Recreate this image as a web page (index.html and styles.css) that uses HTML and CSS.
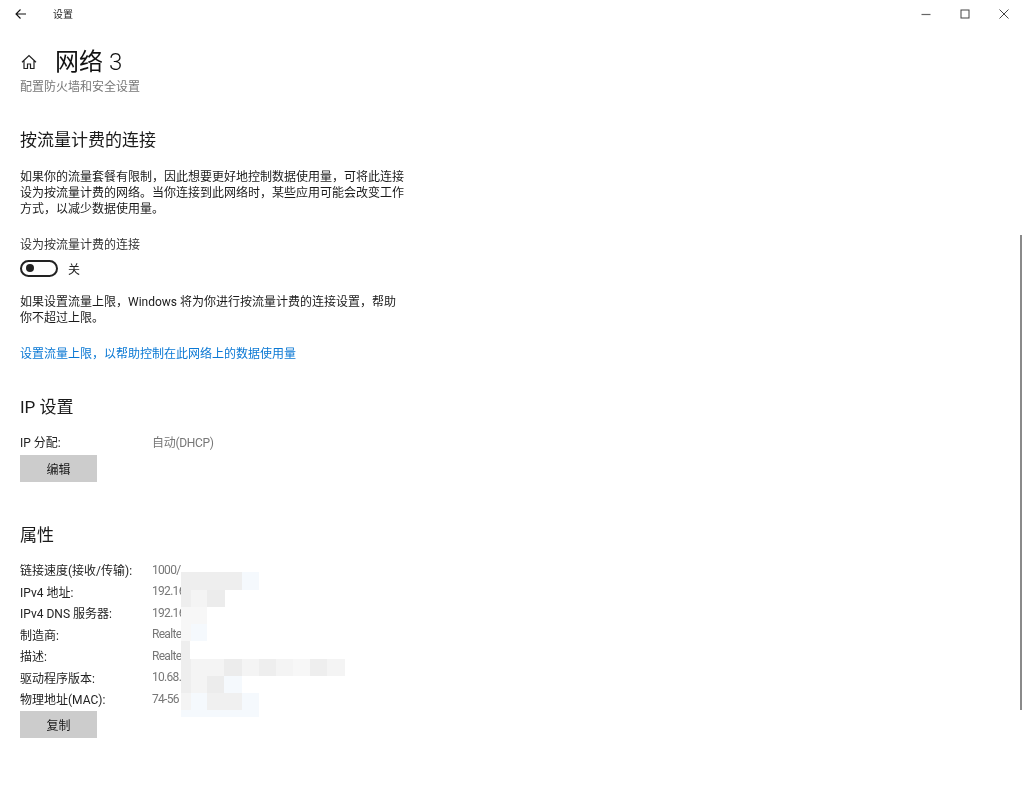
FILE: index.html
```html
<!DOCTYPE html>
<html lang="zh-CN">
<head>
<meta charset="utf-8">
<title>设置</title>
<link rel="stylesheet" href="styles.css">
</head>
<body>
<div class="window">
  <header class="titlebar">
    <svg class="back" width="14" height="14" viewBox="0 0 14 14"><path d="M12 7H2M6.500 2.500L2 7l4.500 4.500" fill="none" stroke="#111" stroke-width="1.100"/></svg>
    <span class="app-name">设置</span>
    <div class="controls">
      <svg class="ctl" width="12" height="12" viewBox="0 0 12 12"><path d="M1.500 6.500h9" stroke="#666" stroke-width="1.200"/></svg>
      <svg class="ctl" width="12" height="12" viewBox="0 0 12 12"><rect x="2" y="2" width="8" height="8" fill="none" stroke="#444" stroke-width="1"/></svg>
      <svg class="ctl" width="12" height="12" viewBox="0 0 12 12"><path d="M1.500 1.500l9 9M10.500 1.500l-9 9" stroke="#444" stroke-width="1"/></svg>
    </div>
  </header>
  <main class="content">
    <div class="page-head">
      <svg class="home" width="16" height="16" viewBox="0 0 16 16"><path d="M1 8.200L8 1.500l7 6.700M3 6.500V14.500h3.500v-4.500h3v4.500H13V6.500" fill="none" stroke="#222" stroke-width="1.200"/></svg>
      <h1 class="page-title">网络 <span class="page-num">3</span></h1>
    </div>
    <p class="page-sub">配置防火墙和安全设置</p>

    <h2 class="section-title first">按流量计费的连接</h2>
    <p class="para">如果你的流量套餐有限制，因此想要更好地控制数据使用量，可将此连接设为按流量计费的网络。当你连接到此网络时，某些应用可能会改变工作方式，以减少数据使用量。</p>
    <p class="label">设为按流量计费的连接</p>
    <div class="toggle-row">
      <span class="toggle"><span class="knob"></span></span>
      <span class="toggle-text">关</span>
    </div>
    <p class="para para-limit">如果设置流量上限，Windows 将为你进行按流量计费的连接设置，帮助你不超过上限。</p>
    <a class="link" href="#">设置流量上限，以帮助控制在此网络上的数据使用量</a>

    <h2 class="section-title ip">IP 设置</h2>
    <dl class="props props-ip">
      <div class="prop"><dt>IP 分配:</dt><dd>自动(DHCP)</dd></div>
    </dl>
    <button class="btn">编辑</button>

    <h2 class="section-title attr">属性</h2>
    <dl class="props props-attr">
      <div class="prop"><dt>链接速度(接收/传输):</dt><dd>1000/</dd></div>
      <div class="prop"><dt>IPv4 地址:</dt><dd>192.16</dd></div>
      <div class="prop"><dt>IPv4 DNS 服务器:</dt><dd>192.16</dd></div>
      <div class="prop"><dt>制造商:</dt><dd>Realte</dd></div>
      <div class="prop"><dt>描述:</dt><dd>Realte</dd></div>
      <div class="prop"><dt>驱动程序版本:</dt><dd>10.68.</dd></div>
      <div class="prop"><dt>物理地址(MAC):</dt><dd>74-56</dd></div>
    </dl>
    <button class="btn btn-copy">复制</button>
  </main>

  <div class="mosaic">
    <div class="m-row h18"><i class="w61 g1"></i><i class="w17 b"></i></div>
    <div class="m-row h17"><i class="w10 g1"></i><i class="w16 g3"></i><i class="w18 g2"></i></div>
    <div class="m-row h17"><i class="w26 g4"></i></div>
    <div class="m-row h17"><i class="w10 g4"></i><i class="w16 b"></i></div>
    <div class="m-row h18"><i class="w9 g1"></i></div>
    <div class="m-row h17"><i class="w10 g1"></i><i class="w33 g3"></i><i class="w18 g2"></i><i class="w17 g3"></i><i class="w17 g1"></i><i class="w17 g3"></i><i class="w17 g4"></i><i class="w17 g1"></i><i class="w18 g3"></i></div>
    <div class="m-row h17"><i class="w10 g1"></i><i class="w16 g3"></i><i class="w17 g2"></i><i class="w18 b"></i></div>
    <div class="m-row h17"><i class="w10 g3"></i><i class="w16 b"></i><i class="w35 g5"></i><i class="w17 b"></i></div>
    <div class="m-row h7"><i class="w78 b"></i></div>
  </div>
  <div class="scrollbar"></div>
</div>
</body>
</html>
```
FILE: styles.css
```css
* { box-sizing: border-box; }
html, body { margin: 0; padding: 0; background: #fff; }
body {
  font-family: Roboto, "Noto Sans CJK SC", sans-serif;
  font-size: 12px;
  color: #1c1c1c;
}
.window { position: relative; width: 1024px; height: 795px; overflow: hidden; filter: blur(0.35px); }

.titlebar { display: flex; align-items: center; height: 27px; padding-left: 14px; }
.back { flex: none; }
.app-name { margin-left: 25px; font-size: 10px; color: #222; }
.controls { margin-left: auto; display: flex; gap: 27px; padding-right: 14px; }
.ctl { display: block; }

.content { padding: 0 0 0 20px; width: 404px; }
.page-head { display: flex; align-items: center; margin-top: 19px; height: 32px; }
.home { flex: none; margin-left: 1px; }
.page-title { margin: 0 0 0 18px; font-size: 24px; font-weight: 400; line-height: 32px; color: #111; }
.page-num { font-weight: 300; }
.page-sub { margin: 1px 0 0; font-size: 12px; line-height: 16px; color: #777; }

.section-title { margin: 0; font-size: 17px; font-weight: 400; line-height: 24px; color: #1a1a1a; }
.section-title.first { margin-top: 33px; }
.section-title.ip { margin-top: 33px; }
.section-title.attr { margin-top: 41px; }

.para { margin: 17px 0 0; font-size: 12px; line-height: 16px; width: 384px; color: #1a1a1a; }
.label { margin: 20px 0 0; line-height: 16px; color: #333; }
.toggle-row { display: flex; align-items: center; margin-top: 6px; height: 18px; }
.toggle {
  display: flex; align-items: center;
  width: 38px; height: 17px; padding-left: 4px;
  border: 2px solid #222; border-radius: 9px;
}
.knob { width: 8px; height: 8px; border-radius: 50%; background: #222; }
.toggle-text { margin-left: 10px; color: #222; }
.para-limit { margin-top: 17px; }
.link { display: block; margin-top: 20px; line-height: 16px; color: #0a78d4; text-decoration: none; }

.props { margin: 0; }
.props-ip { margin-top: 14px; }
.props-attr { margin-top: 12px; }
.prop { display: flex; height: 21.500px; align-items: center; }
.props-ip .prop { height: 16px; }
.prop dt { width: 132px; flex: none; color: #222; }
.prop dd { margin: 0; color: #777; white-space: nowrap; }
.props-ip dd { letter-spacing: -0.3px; }
.props-attr dd { letter-spacing: -0.7px; }

.btn {
  display: block; width: 77px; height: 27px; margin-top: 6px;
  border: 0; background: #ccc; color: #1a1a1a;
  font: inherit; font-size: 12px; padding: 0;
}
.btn-copy { margin-top: 1px; }

.mosaic { position: absolute; left: 181px; top: 572px; width: 170px; }
.m-row { display: flex; width: fit-content; background: #fff; }
.m-row i { display: block; height: 100%; }
.h18 { height: 18px; } .h17 { height: 17px; } .h7 { height: 7px; }
.w9 { width: 9px; } .w10 { width: 10px; } .w16 { width: 16px; } .w17 { width: 17px; }
.w18 { width: 18px; } .w26 { width: 26px; } .w33 { width: 33px; } .w35 { width: 35px; } .w61 { width: 61px; } .w78 { width: 78px; }
.g1 { background: #eeeeee; }
.g2 { background: #ececec; }
.g3 { background: #f4f4f4; }
.g4 { background: #f7f7f7; }
.g5 { background: #f0f0f0; }
.b { background: #f5f9fd; }

.scrollbar { position: absolute; left: 1020px; top: 235px; width: 2px; height: 475px; background: #8a8a8a; }
```
